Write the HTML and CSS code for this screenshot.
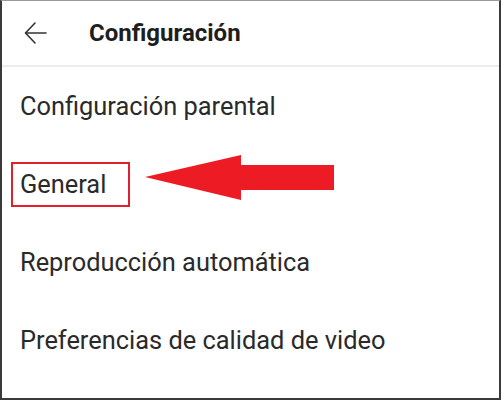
FILE: index.html
```html
<!DOCTYPE html>
<html lang="es">
<head>
<meta charset="utf-8">
<title>Configuración</title>
<link rel="stylesheet" href="styles.css">
</head>
<body>
<div class="frame">
  <header class="topbar">
    <span class="back" aria-label="Atrás">
      <svg width="24" height="24" viewBox="0 0 24 24" fill="none" stroke="#333" stroke-width="1.6" stroke-linecap="round" stroke-linejoin="round">
        <path d="M22 12H2"/>
        <path d="M11 2L1.5 12L11 22"/>
      </svg>
    </span>
    <h1 class="title">Configuración</h1>
  </header>
  <ul class="menu">
    <li class="item">Configuración parental</li>
    <li class="item"><span class="highlight">General</span></li>
    <li class="item">Reproducción automática</li>
    <li class="item">Preferencias de calidad de video</li>
  </ul>
  <svg class="pointer" width="200" height="50" viewBox="0 0 200 50">
    <path d="M1 22 L97 0 L97 10 L190 10 L190 35 L97 35 L97 45 Z" fill="#ed1c24"/>
  </svg>
</div>
</body>
</html>
```

FILE: styles.css
```css
html, body {
  margin: 0;
  padding: 0;
  background: #ffffff;
}

.frame {
  position: relative;
  box-sizing: border-box;
  width: 501px;
  height: 400px;
  border-left: 2px solid #3a3a3a;
  border-right: 2px solid #3a3a3a;
  border-bottom: 2px solid #3a3a3a;
  border-top: 1px solid #9a9a9a;
  background: #ffffff;
  overflow: hidden;
  font-family: Roboto, "Liberation Sans", Arial, sans-serif;
  color: #262626;
}

.topbar {
  box-sizing: border-box;
  height: 66px;
  display: flex;
  align-items: center;
  border-bottom: 2px solid #ececec;
}

.back {
  display: flex;
  margin-left: 22px;
  width: 24px;
  height: 24px;
}

.title {
  margin: 0 0 0 41px;
  font-size: 24px;
  font-weight: 700;
  color: #1e1e1e;
}

.menu {
  list-style: none;
  margin: 0;
  padding: 0;
}

.item {
  height: 78px;
  line-height: 78px;
  padding-left: 18px;
  font-size: 25.4px;
  color: #2a2a2a;
}

.highlight {
  display: inline-block;
  margin-left: -9px;
  padding: 0 22px 0 7px;
  line-height: 41px;
  border: 2px solid #e0202a;
}

.pointer {
  position: absolute;
  left: 142px;
  top: 154px;
}
```
